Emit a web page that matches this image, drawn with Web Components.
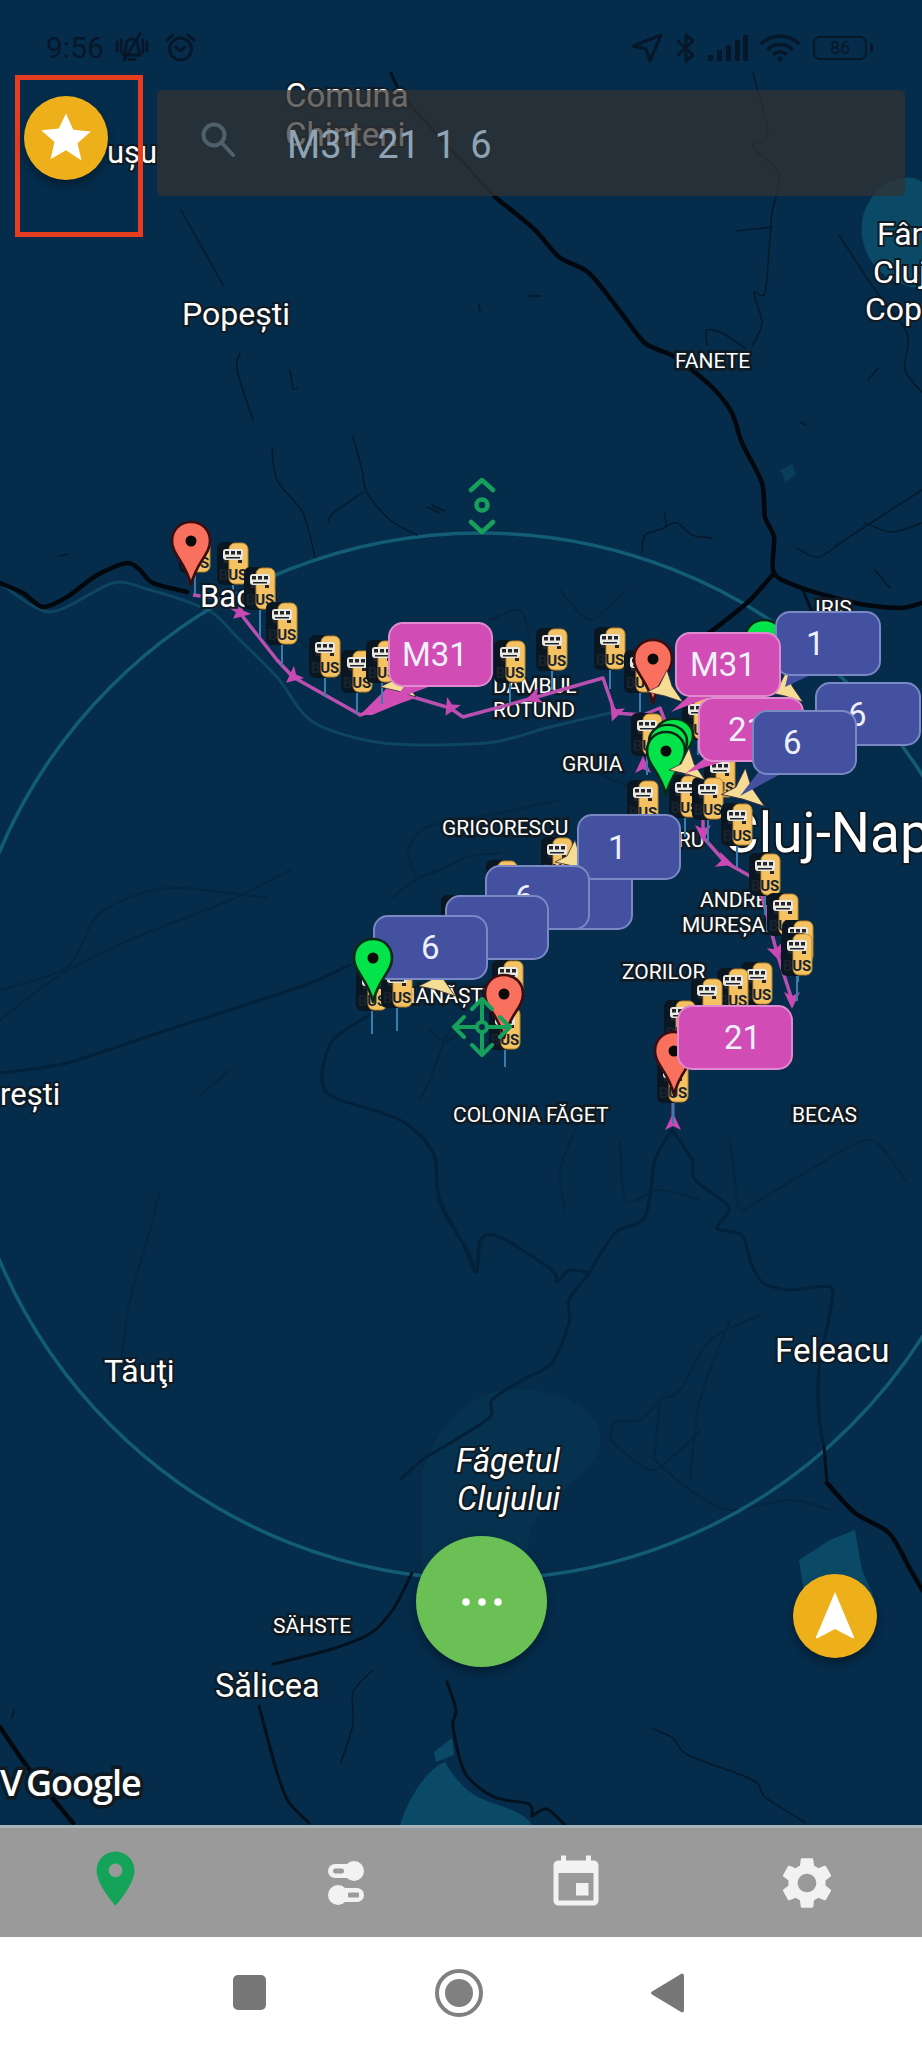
<!DOCTYPE html>
<html lang="ro">
<head>
<meta charset="utf-8">
<title>Map</title>
<style>
html,body{margin:0;padding:0;background:#fff}
body{font-family:Roboto,"Liberation Sans",sans-serif}
</style>
</head>
<body>
<app-shell>
  <map-view>
    <map-roads></map-roads>
    <map-label x="107" b="163" s="31">ușu</map-label>
    <map-label x="285" b="107" s="33">Comuna</map-label>
    <map-label x="285" b="146" s="33">Chinteni</map-label>
    <map-label x="182" b="325" s="32">Popești</map-label>
    <map-label x="877" b="245" s="32">Fânațele</map-label>
    <map-label x="873" b="283" s="32">Clujului</map-label>
    <map-label x="865" b="320" s="32">Copârșaie</map-label>
    <map-label x="675" b="369" s="21">FANETE</map-label>
    <map-label x="815" b="616" s="21">IRIS</map-label>
    <map-label x="562" b="772" s="21">GRUIA</map-label>
    <map-label x="493" b="694" s="21">DÂMBUL</map-label>
    <map-label x="493" b="718" s="21">ROTUND</map-label>
    <map-label x="442" b="836" s="21">GRIGORESCU</map-label>
    <map-label x="625" b="848" s="21">CENTRU</map-label>
    <map-label x="700" b="908" s="21">ANDREI</map-label>
    <map-label x="682" b="933" s="21">MUREȘANU</map-label>
    <map-label x="622" b="980" s="21">ZORILOR</map-label>
    <map-label x="397" b="1004" s="21">MĂNĂȘTUR</map-label>
    <map-label x="453" b="1123" s="21">COLONIA FĂGET</map-label>
    <map-label x="792" b="1123" s="21">BECAS</map-label>
    <map-label x="0" b="1105" s="31">rești</map-label>
    <map-label x="104" b="1382" s="32">Tăuţi</map-label>
    <map-label x="775" b="1362" s="33">Feleacu</map-label>
    <map-label x="456" b="1472" s="32.500" i>Făgetul</map-label>
    <map-label x="457" b="1510" s="32.500" i>Clujului</map-label>
    <map-label x="273" b="1634" s="21">SÄHSTE</map-label>
    <map-label x="215" b="1697" s="32.500">Sălicea</map-label>
    <map-label x="0" b="1795" s="36" g>V</map-label>
    <map-label x="26" b="1795" s="36" g>Google</map-label>
    <map-label x="723" b="852" s="55">Cluj-Napoca</map-label>

    <map-route></map-route>

    <bus-marker x="180" y="530" stem="22"></bus-marker>
    <bus-marker x="218" y="542" stem="18"></bus-marker>
    <map-label x="200" b="607" s="31">Baciu</map-label>
    <bus-marker x="245" y="567" stem="28"></bus-marker>
    <bus-marker x="267" y="602" stem="22"></bus-marker>
    <bus-marker x="310" y="635" stem="20"></bus-marker>
    <bus-marker x="342" y="650" stem="22"></bus-marker>
    <bus-marker x="367" y="640" stem="22"></bus-marker>
    <bus-marker x="495" y="640" stem="22"></bus-marker>
    <bus-marker x="537" y="628" stem="20"></bus-marker>
    <bus-marker x="595" y="627" stem="20"></bus-marker>
    <bus-marker x="625" y="650" stem="20"></bus-marker>
    <bus-marker x="632" y="713" stem="20"></bus-marker>
    <bus-marker x="683" y="697" stem="16"></bus-marker>
    <bus-marker x="628" y="780" stem="20"></bus-marker>
    <bus-marker x="670" y="775" stem="20"></bus-marker>
    <bus-marker x="705" y="755" stem="20"></bus-marker>
    <bus-marker x="693" y="777" stem="26"></bus-marker>
    <bus-marker x="722" y="803" stem="22"></bus-marker>
    <bus-marker x="750" y="853" stem="20"></bus-marker>
    <bus-marker x="542" y="837" stem="20"></bus-marker>
    <bus-marker x="487" y="860" stem="20"></bus-marker>
    <bus-marker x="442" y="895" stem="20"></bus-marker>
    <bus-marker x="768" y="893" stem="20"></bus-marker>
    <bus-marker x="783" y="920" stem="20"></bus-marker>
    <bus-marker x="782" y="933" stem="26"></bus-marker>
    <bus-marker x="742" y="962" stem="20"></bus-marker>
    <bus-marker x="718" y="968" stem="20"></bus-marker>
    <bus-marker x="692" y="978" stem="20"></bus-marker>
    <bus-marker x="665" y="1000" stem="20"></bus-marker>
    <bus-marker x="658" y="1060" stem="22"></bus-marker>
    <bus-marker x="493" y="960" stem="20"></bus-marker>
    <bus-marker x="490" y="1007" stem="18"></bus-marker>
    <bus-marker x="357" y="968" stem="24"></bus-marker>
    <bus-marker x="382" y="965" stem="24"></bus-marker>

    <map-pin x="743" y="618" c="g"></map-pin>
    <map-pin x="170" y="520" c="r"></map-pin>
    <map-pin x="632" y="638" c="r"></map-pin>
    <map-pin x="653" y="717" c="g" h="60"></map-pin>
    <map-pin x="647" y="723" c="g" h="60"></map-pin>
    <map-pin x="645" y="730" c="g"></map-pin>
    <map-pin x="653" y="1030" c="r"></map-pin>
    <map-pin x="483" y="973" c="r"></map-pin>

    <map-star x="398" y="685"></map-star>
    <map-star x="665" y="690"></map-star>
    <map-star x="687" y="768"></map-star>
    <map-star x="743" y="792" w="1.2"></map-star>
    <map-star x="785" y="690"></map-star>
    <map-star x="437" y="984"></map-star>
    <map-star x="573" y="860"></map-star>

    <map-bubble x="388" y="622" w="105" h="65" c="m" p="12" tail="18,62 48,62 6,78">M31</map-bubble>
    <map-bubble x="775" y="611" w="106" h="65" c="b" p="29" tail="14,60 44,60 10,76">1</map-bubble>
    <map-bubble x="675" y="632" w="106" h="65" c="m" p="13" tail="18,60 48,60 -4,80">M31</map-bubble>
    <map-bubble x="815" y="682" w="106" h="64" c="b" p="31">6</map-bubble>
    <map-bubble x="698" y="697" w="106" h="65" c="m" p="28" tail="8,60 40,60 -12,76">21</map-bubble>
    <map-bubble x="752" y="710" w="105" h="65" c="b" p="29" tail="8,60 36,60 -12,86">6</map-bubble>
    <map-bubble x="528" y="865" w="105" h="65" c="b" p="30"> </map-bubble>
    <map-bubble x="577" y="814" w="104" h="66" c="b" p="29">1</map-bubble>
    <map-bubble x="485" y="865" w="105" h="65" c="b" p="28">6</map-bubble>
    <map-bubble x="445" y="895" w="104" h="65" c="b" p="30"> </map-bubble>
    <map-bubble x="373" y="915" w="115" h="65" c="b" p="46">6</map-bubble>
    <map-pin x="352" y="937" c="g"></map-pin>
    <map-bubble x="677" y="1005" w="116" h="65" c="m" p="45">21</map-bubble>

    <map-gizmo></map-gizmo>

    <search-bar>M31 21 1 6</search-bar>
    <status-bar></status-bar>
    <focus-box></focus-box>
    <round-button x="24" y="96" size="84" c="#eeb01a">
      <svg viewBox="0 0 24 24" width="60" height="60"><path fill="#fff" d="M12 2.2l2.9 6.5 7 .7-5.3 4.7 1.6 6.9L12 16.9 5.800 20.500l1.600-6.900L2.100 8.900l7-.7z"/></svg>
    </round-button>
    <round-button x="793" y="1574" size="84" c="#eeb01a">
      <svg viewBox="0 0 40 48" width="40" height="48"><path fill="#fff" d="M20 0l19 45c.4 1-.6 1.800-1.500 1.300L20 37 2.500 46.300C1.600 46.800.6 46 1 45z"/></svg>
    </round-button>
    <round-button x="416" y="1536" size="131" c="#6abf55">
      <svg viewBox="0 0 44 10" width="44" height="10"><g fill="#fff"><circle cx="6" cy="5" r="3.800"/><circle cx="22" cy="5" r="3.800"/><circle cx="38" cy="5" r="3.800"/></g></svg>
    </round-button>
  </map-view>
  <tab-bar></tab-bar>
  <nav-bar></nav-bar>
</app-shell>

<script>
function shadow(el, css, html){
  const r = el.attachShadow({mode:'open'});
  r.innerHTML = '<style>'+css+'</style>'+html;
  return r;
}
const num=(el,n,d=0)=>el.hasAttribute(n)?parseFloat(el.getAttribute(n)):d;

customElements.define('app-shell', class extends HTMLElement{
  connectedCallback(){
    shadow(this, ':host{display:flex;flex-direction:column;width:922px;height:2048px;overflow:hidden}', '<slot></slot>');
  }
});

customElements.define('map-view', class extends HTMLElement{
  connectedCallback(){
    shadow(this, ':host{display:block;position:relative;flex:1 1 auto;min-height:0;overflow:hidden;background:#052c4b}', '<slot></slot>');
  }
});

function pl(pts){return pts.map(p=>p.join(',')).join(' ')}
// Smooth curve through the points (Catmull-Rom turned into cubic Béziers)
function sm(p){
  let d=`M${p[0][0]} ${p[0][1]}`;
  for(let i=0;i<p.length-1;i++){
    const a=p[Math.max(i-1,0)],b=p[i],c=p[i+1],e=p[Math.min(i+2,p.length-1)],k=0.14;
    d+=`C${(b[0]+(c[0]-a[0])*k).toFixed(1)} ${(b[1]+(c[1]-a[1])*k).toFixed(1)} ${(c[0]-(e[0]-b[0])*k).toFixed(1)} ${(c[1]-(e[1]-b[1])*k).toFixed(1)} ${c[0]} ${c[1]}`;
  }
  return d;
}
const ROADS = {
  black:[
   [[495,197],[535,230],[559,257],[589,273],[619,310],[645,343],[675,357],[712,387],[732,413],[742,443],[762,483],[765,517],[774,537],[774,573],[802,588],[855,603],[899,608],[922,603]],
   [[774,573],[747,603],[700,640]],
   [[0,583],[23,593],[43,607],[67,597],[97,575],[127,563],[140,570],[153,583],[187,592]],
   [[827,1483],[855,1513],[889,1533],[909,1567],[922,1590]],
   [[0,1727],[29,1769],[73,1823]]
  ],
  mid:[
   [[391,73],[406,100],[470,170],[495,197]],
   [[412,1573],[394,1608],[371,1633],[329,1650],[273,1664]],
   [[259,1706],[276,1769],[288,1801],[309,1823]],
   [[447,1682],[456,1710],[453,1727],[465,1773],[494,1797],[529,1804],[532,1816]],
   [[532,1816],[547,1809],[565,1825]],
   [[824,1447],[827,1483]],
   [[802,588],[812,612]]
  ],
  thin:[
   [[181,210],[223,285]],
   [[240,353],[237,370],[253,420]],
   [[272,447],[277,480],[303,513],[315,557]],
   [[353,437],[362,470],[367,493],[390,520],[417,535]],
   [[363,492],[333,513],[328,522]],
   [[290,370],[293,388],[298,388]],
   [[427,507],[440,513]],[[432,505],[444,511]],
   [[753,73],[768,133],[753,147],[779,173],[772,213],[770,237],[765,293],[754,293],[762,323],[752,347]],
   [[737,231],[772,227]],
   [[745,348],[722,333],[707,330],[707,345]],
   [[839,235],[875,290],[907,333],[905,370],[922,392]],
   [[797,548],[819,557],[849,537],[922,490]],
   [[865,523],[892,532],[922,523]],
   [[664,512],[665,527],[645,535],[642,553]],
   [[665,527],[677,523],[692,535],[712,538]],
   [[528,296],[540,296]],[[479,304],[480,312]],
   [[800,422],[806,425]],[[875,570],[890,588]],[[868,380],[878,368]],
   [[373,1670],[353,1692],[353,1724],[341,1762]],
   [[653,1729],[673,1738],[688,1755],[753,1780],[765,1797],[806,1823]],
   [[60,556],[68,554]],
   [[14,1710],[12,1718]]
  ],
  dim:[
   [[0,1073],[67,1063],[167,1030],[300,987],[350,965]],
   [[672,1130],[692,1160],[695,1180],[729,1207],[717,1228],[742,1235],[750,1260],[762,1282],[789,1290],[830,1287],[830,1313],[819,1367],[819,1417],[824,1447]],
   [[672,1130],[655,1160],[645,1217],[615,1233],[589,1273],[569,1300],[569,1323],[552,1363],[522,1380],[492,1400],[490,1417],[455,1440],[422,1460],[400,1480]],
   [[373,1013],[333,1040],[322,1077],[333,1097],[400,1120],[433,1153],[440,1203],[467,1250],[477,1272],[480,1240],[500,1237],[552,1270],[557,1282],[569,1270],[589,1273]]
  ],
  faint:[
   [[0,990],[67,967],[100,913],[167,888],[267,898]],
   [[0,1020],[60,975],[130,940],[230,900],[290,870]],
   [[407,850],[420,877],[467,857],[500,853]],
   [[407,850],[427,827],[500,813],[560,800]],
   [[393,897],[420,877],[456,863]],
   [[437,1160],[437,1190],[462,1243],[475,1272],[484,1235]],
   [[422,1133],[437,1160]],
   [[700,1430],[680,1450],[650,1470],[610,1440]],
   [[760,1315],[710,1340],[680,1390],[660,1400],[640,1420],[615,1422],[610,1440]],
   [[660,1400],[655,1450],[655,1460],[690,1490],[730,1510],[790,1500],[830,1510]],
   [[730,1320],[700,1400],[690,1480]],
   [[620,1140],[626,1200],[660,1190],[700,1200]],
   [[730,1140],[735,1180],[740,1210],[760,1200],[810,1170],[870,1140],[905,1180]],
   [[160,1190],[150,1230],[130,1300],[120,1370]],
   [[580,1120],[560,1170],[565,1210]],
   [[495,1000],[450,1040],[430,1030]],
   [[560,590],[590,620],[625,590]],
   [[300,640],[340,680]],[[530,640],[520,610],[490,620]],
   [[590,770],[660,800]],
   [[470,1040],[450,1030],[430,1080],[420,1100]],
   [[230,1070],[200,1095]]
  ]
};
const WATER = [
 'M885 184 C905 176 915 176 922 182 L922 288 C905 288 885 280 872 262 C860 245 852 210 885 184 Z',
 'M799 1560 L830 1540 L855 1530 L862 1570 L875 1600 L860 1620 L805 1600 Z',
 'M400 1825 C408 1800 425 1770 445 1762 C455 1780 470 1795 485 1800 C505 1808 525 1812 532 1825 Z',
 'M434 1752 L452 1738 L454 1755 L436 1762 Z'
];
customElements.define('map-roads', class extends HTMLElement{
  connectedCallback(){
    const group=(k,w,col)=>ROADS[k].map(r=>`<path d="${sm(r)}" stroke="${col}" stroke-width="${w}"/>`).join('');
    const river=[[0,583],[50,612],[113,583],[150,590],[183,600],[213,613],[237,637],[277,677],[313,722],[383,743],[487,743],[550,727],[610,713]];
    shadow(this, ':host{display:block;position:absolute;inset:0}svg{display:block;width:100%;height:100%}',
    `<svg viewBox="0 0 922 1825" fill="none" stroke-linejoin="round" stroke-linecap="round">
      <path d="M422 1470 C450 1400 490 1385 530 1390 C580 1395 605 1420 600 1445 C590 1480 540 1500 530 1530 C525 1570 520 1600 470 1610 L422 1620 Z" fill="#06324f"/>
      ${WATER.map(d=>`<path d="${d}" fill="#0b4a66"/>`).join('')}
      <path d="M780 470 L792 464 L796 474 L786 482 Z" fill="#0a3d5a"/>
      ${group('faint',2,'#04263f')}
      <path d="${sm(river)}" stroke="#0e4560" stroke-width="3"/>
      ${group('dim',3,'#03223a')}
      <circle cx="481" cy="1056" r="523" stroke="#135c75" stroke-width="3.500"/>
      ${group('thin',1.500,'#041a2a')}
      ${group('mid',3,'#04121e')}
      ${group('black',4.500,'#03080e')}
    </svg>`);
  }
});

customElements.define('map-label', class extends HTMLElement{
  connectedCallback(){
    const s=num(this,'s',21);
    const g=this.hasAttribute('g');
    this.style.left=num(this,'x')+'px';
    this.style.top=(num(this,'b')-0.841*s)+'px';
    this.style.fontSize=s+'px';
    this.style.fontStyle=this.hasAttribute('i')?'italic':'normal';
    if(g){this.style.fontFamily='"Open Sans",sans-serif';this.style.fontWeight='600';this.style.letterSpacing='-1px';}
    shadow(this, `:host{display:block;position:absolute;line-height:1;white-space:nowrap;color:#fff;
      font-family:Roboto,"Liberation Sans",sans-serif;
      -webkit-text-stroke:${g?7:(s>24?4:5)}px #101a22;paint-order:stroke fill}`, '<slot></slot>');
  }
});

customElements.define('map-route', class extends HTMLElement{
  connectedCallback(){
    const route=[[193,595],[217,598],[240,613],[277,660],[293,677],[357,713],[360,715],[413,697],[450,708],[463,717],[533,698],[603,678],[615,713],[643,715],[660,708],[680,760],[703,807],[703,837],[725,862],[757,880],[763,900],[777,953],[792,1000]];
    const arrows=[[240,613,-130],[293,677,-130],[450,708,-150],[533,698,-110],[615,713,-160],[643,765,0],[703,833,180],[725,862,110],[777,953,160],[792,1000,180],[673,1122,0]];
    shadow(this, ':host{display:block;position:absolute;inset:0}svg{display:block;width:100%;height:100%}',
    `<svg viewBox="0 0 922 1825" fill="none">
      <polyline points="${pl(route)}" stroke="#b94fae" stroke-width="3.500" stroke-linejoin="round"/>
      <polyline points="673,1095 673,1122" stroke="#b94fae" stroke-width="3"/>
      <polygon points="360,715 395,680 415,697 372,715" fill="#d14cb4"/>
      ${arrows.map(a=>`<polygon transform="translate(${a[0]} ${a[1]}) rotate(${a[2]})" points="0,-9 8,8 0,4 -8,8" fill="#c948b3"/>`).join('')}
    </svg>`);
  }
});

customElements.define('bus-marker', class extends HTMLElement{
  connectedCallback(){
    const st=num(this,'stem',20);
    this.style.left=num(this,'x')+'px';
    this.style.top=num(this,'y')+'px';
    shadow(this, ':host{display:block;position:absolute;width:30px;height:43px}svg{display:block;overflow:visible}text{font:700 15px Roboto,"Liberation Sans",sans-serif}',
    `<svg width="30" height="43" viewBox="0 0 30 43">
      <line x1="15" y1="42" x2="15" y2="${42+st}" stroke="#3a7dad" stroke-width="2"/>
      <rect x="-1" y="0" width="27" height="43" rx="6" fill="#0a1722"/>
      <rect x="11" y="1" width="19" height="41" rx="6" fill="#f4c262" stroke="#b9852c" stroke-width="1"/>
      <rect x="5" y="7" width="20" height="11" rx="3" fill="#e9e9e2"/>
      <rect x="7" y="9" width="4" height="3.500" fill="#24242a"/><rect x="13" y="9" width="4" height="3.500" fill="#24242a"/><rect x="19" y="9" width="4" height="3.500" fill="#24242a"/>
      <rect x="8" y="15" width="14" height="1.500" fill="#24242a"/>
      <rect x="6" y="18" width="4" height="3" fill="#24242a"/><rect x="20" y="18" width="4" height="3" fill="#24242a"/>
      <text x="15" y="38" text-anchor="middle" fill="#17242f">BUS</text>
    </svg>`);
  }
});

customElements.define('map-pin', class extends HTMLElement{
  connectedCallback(){
    const g=this.getAttribute('c')==='g', h=num(this,'h',67);
    this.style.left=num(this,'x')+'px';
    this.style.top=num(this,'y')+'px';
    const fill=g?'#05e34a':'#f9705f', line=g?'#0a2a18':'#3a0e10';
    shadow(this, `:host{display:block;position:absolute;width:42px;height:${h}px}svg{display:block}`,
    `<svg width="42" height="${h}" viewBox="0 0 42 67" preserveAspectRatio="none">
      <path d="M21 2C10 2 2 10 2 21 2 35 16 42 21 65 26 42 40 35 40 21 40 10 32 2 21 2Z" fill="${fill}" stroke="${line}" stroke-width="2.600" stroke-linejoin="round"/>
      <circle cx="21" cy="21" r="5.500" fill="#0a0a0a"/>
    </svg>`);
  }
});

customElements.define('map-star', class extends HTMLElement{
  connectedCallback(){
    const k=num(this,'w',1);
    this.style.left=num(this,'x')+'px';
    this.style.top=num(this,'y')+'px';
    shadow(this, ':host{display:block;position:absolute;width:0;height:0}svg{display:block;overflow:visible}',
    `<svg width="1" height="1" viewBox="0 0 1 1"><polygon transform="scale(${k})" points="2,-20 7,-4 18,12 0,6 -18,2 -6,-4" fill="#f6dd94" stroke="#3a2a44" stroke-width=".8"/></svg>`);
  }
});

customElements.define('map-bubble', class extends HTMLElement{
  connectedCallback(){
    const w=num(this,'w',105),h=num(this,'h',65),p=num(this,'p',30);
    const m=this.getAttribute('c')==='m';
    const fill=m?'#d14cb4':'#4351a0', line=m?'#e08bd0':'#7a88c4';
    this.style.left=num(this,'x')+'px';
    this.style.top=num(this,'y')+'px';
    this.style.width=w+'px';
    this.style.height=h+'px';
    const t=this.getAttribute('tail');
    shadow(this, `:host{display:block;position:absolute;box-sizing:border-box}
      .b{box-sizing:border-box;position:absolute;inset:0;display:flex;align-items:center;padding-left:${p}px;background:${fill};
        border:2px solid ${line};border-radius:15px;color:#eef0fa;font:400 33px/1 Roboto,"Liberation Sans",sans-serif;white-space:pre}
      svg{position:absolute;left:0;top:0;overflow:visible;width:1px;height:1px}`,
      (t?`<svg viewBox="0 0 1 1"><polygon points="${t}" fill="${fill}"/></svg>`:'')+`<div class="b"><slot></slot></div>`);
  }
});

customElements.define('map-gizmo', class extends HTMLElement{
  connectedCallback(){
    shadow(this, ':host{display:block;position:absolute;inset:0;pointer-events:none}svg{display:block;width:100%;height:100%}',
    `<svg viewBox="0 0 922 1825" fill="none" stroke="#17a05c" stroke-linecap="round" stroke-linejoin="round">
      <g stroke-width="4.500">
        <path d="M471 490l11-10 11 10M471 522l11 10 11-10"/>
        <circle cx="482" cy="505" r="5.500"/>
      </g>
      <g transform="translate(482 1027)" stroke-width="4">
        <circle r="5"/>
        <path d="M0-5V-26M0 5V26M-5 0H-26M5 0H26"/>
        <path d="M-10-18L0-28 10-18M-10 18L0 28 10 18M-18-10L-28 0-18 10M18-10L28 0 18 10"/>
      </g>
    </svg>`);
  }
});

customElements.define('search-bar', class extends HTMLElement{
  connectedCallback(){
    shadow(this, `:host{display:flex;position:absolute;left:157px;top:90px;width:748px;height:106px;box-sizing:border-box;align-items:center;
      padding:0 0 0 43px;gap:51px;background:rgba(50,50,50,.72);border-radius:5px;color:#8ea3b3;
      font:400 38px/1 Roboto,"Liberation Sans",sans-serif;word-spacing:5px}
      svg{display:block;flex:none;margin-bottom:8px}.t{margin-top:4px}`,
    `<svg width="36" height="36" viewBox="0 0 36 36" fill="none" stroke="#4f606b" stroke-width="4" stroke-linecap="round"><circle cx="14" cy="14" r="10.500"/><path d="M22 22l11 12"/></svg><div class="t"><slot></slot></div>`);
  }
});

customElements.define('status-bar', class extends HTMLElement{
  connectedCallback(){
    const C='#07172a';
    shadow(this, `:host{display:flex;position:absolute;left:0;right:0;top:30px;height:36px;box-sizing:border-box;padding:0 55px 0 46px;align-items:center;justify-content:space-between;color:${C}}
      .g{display:flex;align-items:center}
      .time{font:400 30px/1 Roboto,"Liberation Sans",sans-serif;margin-right:10px}
      svg{display:block;fill:none;stroke:${C};stroke-linecap:round;stroke-linejoin:round}
      .bat{position:relative;display:flex;align-items:center;justify-content:center;box-sizing:border-box;width:54px;height:24px;border:2.500px solid ${C};border-radius:7px;font:400 18px/1 Roboto,"Liberation Sans",sans-serif;margin-left:13px}
      .bat i{position:absolute;right:-8px;top:5px;width:3px;height:9px;background:${C};border-radius:2px}`,
    `<div class="g">
      <span class="time">9:56</span>
      <svg width="36" height="32" viewBox="0 0 36 32" stroke-width="2.800"><path d="M9 23c2-2 3-4 3-10a6 6 0 0 1 12 0c0 6 1 8 3 10zM15 27.500h6M3 10v9M33 10v9M29 8v12M7 8v12"/><path d="M10 28L26 2"/></svg>
      <svg style="margin-left:14px" width="33" height="32" viewBox="0 0 33 32" stroke-width="3"><circle cx="16.500" cy="17" r="11"/><path d="M12 15l4.500 4 4.500-4M3 8l6-5M30 8l-6-5"/></svg>
    </div>
    <div class="g">
      <svg width="32" height="30" viewBox="0 0 32 30" stroke-width="3"><path d="M30 2L2 13l13 3 4 12z"/></svg>
      <svg style="margin-left:13px" width="20" height="30" viewBox="0 0 20 30" stroke-width="3"><path d="M2 8l15 14-7 6V2l7 6L2 22"/></svg>
      <svg style="margin-left:12px" width="40" height="26" viewBox="0 0 40 26" stroke="none"><g fill="${C}" stroke="none"><rect x="0" y="20" width="5" height="6" rx="1"/><rect x="9" y="15" width="5" height="11" rx="1"/><rect x="18" y="10" width="5" height="16" rx="1"/><rect x="27" y="5" width="5" height="21" rx="1"/><rect x="35" y="0" width="5" height="26" rx="1"/></g></svg>
      <svg style="margin-left:12px" width="40" height="30" viewBox="0 0 40 30" stroke-width="3.500"><path d="M2 10c10-9 26-9 36 0M8 16c7-6 17-6 24 0M14 21c4-3 8-3 12 0"/><circle cx="20" cy="26" r="2.500" fill="${C}" stroke="none"/></svg>
      <div class="bat">86<i></i></div>
    </div>`);
  }
});

customElements.define('focus-box', class extends HTMLElement{
  connectedCallback(){
    shadow(this, ':host{display:block;position:absolute;left:15px;top:75px;width:128px;height:162px;box-sizing:border-box;border:5px solid #e63c1f}', '');
  }
});

customElements.define('round-button', class extends HTMLElement{
  connectedCallback(){
    const s=num(this,'size',84);
    this.style.left=num(this,'x')+'px';
    this.style.top=num(this,'y')+'px';
    this.style.width=s+'px';
    this.style.height=s+'px';
    this.style.background=this.getAttribute('c');
    shadow(this, ':host{display:flex;position:absolute;align-items:center;justify-content:center;border-radius:50%;box-shadow:0 5px 10px rgba(0,0,0,.35)}', '<slot></slot>');
  }
});

customElements.define('tab-bar', class extends HTMLElement{
  connectedCallback(){
    shadow(this, `:host{display:grid;grid-template-columns:repeat(4,1fr);flex:none;height:112px;box-sizing:border-box;background:#999a99;border-top:3px solid #a9b4b9;align-items:center;justify-items:center}
      svg{display:block}`,
    `<svg style="margin-bottom:8px" width="65" height="65" viewBox="0 0 24 24"><path fill="#15a35a" d="M12 2C8.130 2 5 5.130 5 9c0 5.250 7 13 7 13s7-7.750 7-13c0-3.870-3.130-7-7-7zm0 9.500a2.500 2.500 0 0 1 0-5 2.500 2.500 0 0 1 0 5z"/></svg>
    <svg width="36" height="44" viewBox="0 0 36 44"><g fill="#f2f2f2"><rect x="0" y="3" width="30" height="14" rx="7"/><circle cx="26" cy="10" r="10"/><rect x="6" y="27" width="30" height="14" rx="7"/><circle cx="10" cy="34" r="10"/></g><g fill="#999a99"><rect x="5" y="7.500" width="11" height="5" rx="2.500"/><rect x="20" y="31.500" width="11" height="5" rx="1"/></g></svg>
    <svg width="60" height="60" viewBox="0 0 24 24"><path fill="#f2f2f2" d="M17 12h-5v5h5v-5zM16 1v2H8V1H6v2H5c-1.110 0-1.990.9-1.990 2L3 19c0 1.100.89 2 2 2h14c1.100 0 2-.9 2-2V5c0-1.100-.9-2-2-2h-1V1h-2zm3 18H5V8h14v11z"/></svg>
    <svg width="62" height="62" viewBox="0 0 24 24"><path fill="#f2f2f2" d="M19.140 12.940c.04-.3.06-.61.06-.94 0-.32-.02-.64-.07-.94l2.030-1.580c.18-.14.23-.41.12-.61l-1.920-3.320c-.12-.22-.37-.29-.59-.22l-2.390.96c-.5-.38-1.030-.7-1.620-.94l-.36-2.540c-.04-.24-.24-.41-.48-.41h-3.840c-.24 0-.43.17-.47.41l-.36 2.540c-.59.24-1.130.57-1.620.94l-2.390-.96c-.22-.08-.47 0-.59.22L2.740 8.870c-.12.21-.08.47.12.61l2.030 1.580c-.05.3-.09.63-.09.94s.02.64.07.94l-2.030 1.580c-.18.14-.23.41-.12.61l1.920 3.320c.12.22.37.29.59.22l2.390-.96c.5.38 1.030.7 1.620.94l.36 2.540c.05.24.24.41.48.41h3.840c.24 0 .44-.17.47-.41l.36-2.540c.59-.24 1.130-.56 1.620-.94l2.390.96c.22.08.47 0 .59-.22l1.920-3.320c.12-.22.07-.47-.12-.61l-2.010-1.580zM12 15.600c-1.980 0-3.600-1.620-3.600-3.600s1.620-3.600 3.600-3.600 3.600 1.620 3.600 3.600-1.620 3.600-3.600 3.600z"/></svg>`);
  }
});

customElements.define('nav-bar', class extends HTMLElement{
  connectedCallback(){
    shadow(this, `:host{display:flex;flex:none;height:111px;background:#fff;align-items:center;padding-left:233px;box-sizing:border-box;padding-bottom:0}
      svg{display:block}.sq{width:33px;height:35px;border-radius:5px;background:#777}`,
    `<div class="sq"></div>
     <svg style="margin-left:168px" width="50" height="50" viewBox="0 0 50 50"><circle cx="25" cy="25" r="22" fill="none" stroke="#808080" stroke-width="4"/><circle cx="25" cy="25" r="14" fill="#808080"/></svg>
     <svg style="margin-left:167px" width="33" height="40" viewBox="0 0 33 40"><path fill="#777" d="M30 1c1.500-1 3 0 3 2v34c0 2-1.500 3-3 2L1 21.500c-1.300-.8-1.300-2.200 0-3z"/></svg>`);
  }
});
</script>
</body>
</html>
